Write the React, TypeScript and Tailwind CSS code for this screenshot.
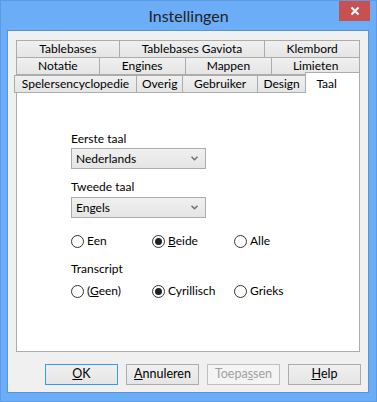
import React from 'react';

const font = { fontFamily: 'Lato, "Noto Sans", sans-serif' };

function Tab({ label, w, selected }: { label: string; w: string; selected?: boolean }) {
  if (selected) {
    return (
      <div className={`${w} -ml-px h-[21px] -mt-[2px] relative z-10 bg-white border border-b-0 border-[#adadad] flex items-start pl-[10px] pt-[2px] text-[12px] text-black`}>
        {label}
      </div>
    );
  }
  return (
    <div className={`${w} -ml-px first:ml-0 h-[18px] border border-[#acacac] bg-gradient-to-b from-[#f0f0f0] to-[#e5e5e5] flex items-center justify-center text-[12px] text-black leading-none`}>
      {label}
    </div>
  );
}

function Dropdown({ value }: { value: string }) {
  return (
    <div className="w-[135px] h-[21px] border border-[#acacac] bg-gradient-to-b from-[#f0f0f0] to-[#e5e5e5] flex items-center justify-between pl-[4px] pr-[7px] text-[12px] text-black">
      <span>{value}</span>
      <svg width="7" height="5" viewBox="0 0 7 5">
        <path d="M0.5 0.8 L3.5 3.8 L6.5 0.8" fill="none" stroke="#707070" strokeWidth="1.5" />
      </svg>
    </div>
  );
}

function Radio({ label, checked, w }: { label: React.ReactNode; checked?: boolean; w: string }) {
  return (
    <div className={`${w} h-[18px] flex items-center gap-[3px] text-[12px] text-black`}>
      <span className="w-[13px] h-[13px] rounded-full border border-[#333] bg-white flex items-center justify-center">
        {checked && <span className="w-[7px] h-[7px] rounded-full bg-[#222]" />}
      </span>
      <span>{label}</span>
    </div>
  );
}

function Button({ children, primary, disabled }: { children: React.ReactNode; primary?: boolean; disabled?: boolean }) {
  const cls = disabled
    ? 'border-[#bfbfbf] bg-[#f4f4f4] text-[#a0a0a0]'
    : primary
      ? 'border-[#3399ff] bg-gradient-to-b from-[#f0f0f0] to-[#e5e5e5] text-black'
      : 'border-[#acacac] bg-gradient-to-b from-[#f0f0f0] to-[#e5e5e5] text-black';
  return (
    <div className={`w-[73px] h-[21px] border ${cls} flex items-center justify-center text-[12.5px]`}>
      {children}
    </div>
  );
}

export default function App() {
  return (
    <div style={font} className="w-[377px] h-[402px] bg-[#6badf6] border border-[#5c9be4] flex flex-col overflow-hidden select-none">
      {/* Title bar */}
      <div className="relative h-[29px] flex items-center justify-center shrink-0">
        <span className="text-[16px] text-[#222] mt-[1px]">Instellingen</span>
        <div className="absolute right-[6px] -top-px w-[31px] h-[21px] bg-[#c75050] flex items-center justify-center">
          <svg width="10" height="10" viewBox="0 0 10 10">
            <path d="M1.5 1.5 L8.5 8.5 M8.5 1.5 L1.5 8.5" stroke="white" strokeWidth="2" />
          </svg>
        </div>
      </div>

      {/* Client area */}
      <div className="ml-[6px] mr-[7px] mb-[8px] flex-1 bg-[#f0f0f0] border border-[#5a93d8] flex flex-col pt-[9px] px-[8px]">
        {/* Tabs */}
        <div className="flex flex-col">
          <div className="flex">
            <Tab label="Tablebases" w="w-[104px]" />
            <Tab label="Tablebases Gaviota" w="w-[147px]" />
            <Tab label="Klembord" w="w-[96px]" />
          </div>
          <div className="flex -mt-px">
            <Tab label="Notatie" w="w-[84px]" />
            <Tab label="Engines" w="w-[87px]" />
            <Tab label="Mappen" w="w-[88px]" />
            <Tab label="Limieten" w="w-[89px]" />
          </div>
          <div className="flex -mt-px -ml-[2px] items-end">
            <Tab label="Spelersencyclopedie" w="w-[124px]" />
            <Tab label="Overig" w="w-[48px]" />
            <Tab label="Gebruiker" w="w-[76px]" />
            <Tab label="Design" w="w-[50px]" />
            <Tab label="Taal" w="w-[55px]" selected />
          </div>
        </div>

        {/* Panel */}
        <div className="-mt-px h-[260px] bg-white border border-[#adadad] flex flex-col pl-[54px] pt-[40px] text-[12px] text-black">
          <div className="leading-none mb-[3px]">Eerste taal</div>
          <Dropdown value="Nederlands" />
          <div className="leading-none mt-[12px] mb-[4px]">Tweede taal</div>
          <Dropdown value="Engels" />
          <div className="flex mt-[14px]">
            <Radio label="Een" w="w-[81px]" />
            <Radio label={<><u>B</u>eide</>} checked w="w-[82px]" />
            <Radio label="Alle" w="w-[70px]" />
          </div>
          <div className="leading-none mt-[13px] mb-[7px]">Transcript</div>
          <div className="flex">
            <Radio label={<>(<u>G</u>een)</>} w="w-[81px]" />
            <Radio label="Cyrillisch" checked w="w-[82px]" />
            <Radio label="Grieks" w="w-[70px]" />
          </div>
        </div>

        {/* Buttons */}
        <div className="flex justify-end gap-[8px] mt-[12px] -mr-px">
          <Button primary><u>O</u>K</Button>
          <Button><u>A</u>nnuleren</Button>
          <Button disabled>Toepa<u>s</u>sen</Button>
          <Button><u>H</u>elp</Button>
        </div>
      </div>
    </div>
  );
}
